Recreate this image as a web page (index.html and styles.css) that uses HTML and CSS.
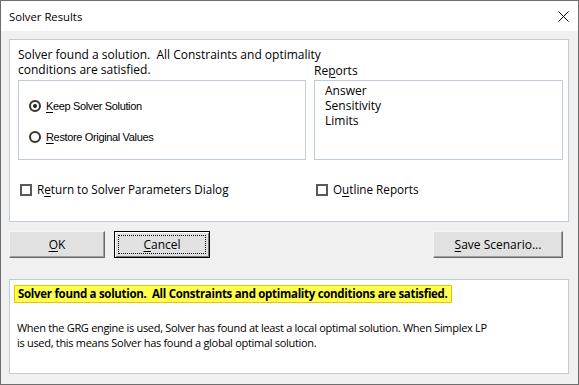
FILE: index.html
```html
<!DOCTYPE html>
<html lang="en">
<head>
  <meta charset="UTF-8" />
  <title>Solver Results</title>
  <link rel="stylesheet" href="styles.css">
</head>
<body>
  <div class="window">
    <div class="titlebar">
      <span class="title">Solver Results</span>
      <svg class="close" width="11" height="11" viewBox="0 0 11 11">
        <path d="M0.5 0.5 L10.5 10.5 M10.5 0.5 L0.5 10.5" stroke="#000" stroke-width="1" fill="none"/>
      </svg>
    </div>

    <div class="content">
      <div class="panel top">
        <div class="grid">
          <div class="message">Solver found a solution.&nbsp; All Constraints and optimality<br>conditions are satisfied.</div>
          <div class="reports-label">Re<u>p</u>orts</div>

          <div class="groupbox">
            <label class="radio"><span class="dot checked"></span><u>K</u>eep Solver Solution</label>
            <label class="radio"><span class="dot"></span><u>R</u>estore Original Values</label>
          </div>
          <div class="listbox">
            <div>Answer</div>
            <div>Sensitivity</div>
            <div>Limits</div>
          </div>

          <label class="check"><span class="box"></span>R<u>e</u>turn to Solver Parameters Dialog</label>
          <label class="check"><span class="box"></span>O<u>u</u>tline Reports</label>
        </div>
      </div>

      <div class="buttons">
        <button class="btn"><u>O</u>K</button>
        <button class="btn focused"><span class="focus"><u>C</u>ancel</span></button>
        <span class="spacer"></span>
        <button class="btn wide"><u>S</u>ave Scenario...</button>
      </div>

      <div class="panel bottom">
        <div class="highlight">Solver found a solution.&nbsp; All Constraints and optimality conditions are satisfied.</div>
        <p class="info">When the GRG engine is used, Solver has found at least a local optimal solution. When Simplex LP<br>is used, this means Solver has found a global optimal solution.</p>
      </div>
    </div>
  </div>
</body>
</html>
```

FILE: styles.css
```css
* { box-sizing: border-box; }
body {
  margin: 0;
  font-family: 'Open Sans', 'Noto Sans', sans-serif;
  font-size: 12px;
  color: #000;
}
u { text-decoration-thickness: 1px; text-underline-offset: 2px; }

.window {
  width: 579px;
  height: 385px;
  border: 1px solid #6e6e6e;
  background: #f0f0f0;
}
.titlebar {
  height: 30px;
  background: #fff;
  display: flex;
  align-items: center;
  justify-content: space-between;
  padding: 0 9px 0 8px;
}
.title { font-size: 11.3px; }
.close { margin-top: 1px; }

.content { padding: 8px 9px 0 8px; }
.panel {
  background: #fff;
  border: 1px solid #c1ccd9;
}
.panel.top { height: 183px; padding: 7px 6px 0 8px; }

.grid {
  display: grid;
  grid-template-columns: 288px 249px;
  column-gap: 8px;
}
.message {
  white-space: nowrap;
  line-height: 15px;
}
.reports-label {
  align-self: end;
  line-height: 15px;
  margin-bottom: -1px;
}
.groupbox, .listbox {
  margin-top: 3px;
  height: 80px;
  border: 1px solid #c1ccd9;
}
.groupbox { padding: 17px 0 0 10px; }
.listbox { padding: 2px 0 0 10px; line-height: 15px; }

.radio {
  display: flex;
  align-items: center;
  font-family: 'Liberation Sans', sans-serif;
  font-size: 11px;
  letter-spacing: -0.35px;
  height: 16px;
  margin-bottom: 15px;
}
.dot {
  width: 12px;
  height: 12px;
  border: 2px solid #333;
  border-radius: 50%;
  margin-right: 5px;
  position: relative;
}
.dot.checked::after {
  content: '';
  position: absolute;
  left: 2px;
  top: 2px;
  width: 4px;
  height: 4px;
  border-radius: 50%;
  background: #222;
}

.check {
  display: flex;
  align-items: center;
  margin-top: 22px;
  margin-left: 2px;
  font-size: 11.7px;
  line-height: 15px;
}
.check .box {
  width: 12px;
  height: 12px;
  border: 2px solid #5a5a5a;
  margin-right: 5px;
}

.buttons {
  display: flex;
  gap: 9px;
  margin-top: 9px;
  height: 27px;
}
.spacer { flex: 1; }
.btn {
  width: 96px;
  height: 27px;
  padding: 0;
  font-family: inherit;
  font-size: 12px;
  color: #000;
  background: #e1e1e1;
  border: 1px solid;
  border-color: #f4f4f4 #6a6a6a #6a6a6a #f4f4f4;
  box-shadow: inset -1px -1px 0 #a0a0a0;
}
.btn.focused {
  border: 1px solid #000;
  box-shadow: inset 1px 1px 0 #fff, inset -1px -1px 0 #7a7a7a;
  padding: 3px;
}
.focus {
  display: flex;
  align-items: center;
  justify-content: center;
  height: 100%;
  border: 1px dotted #000;
}
.btn.wide { width: 130px; margin-right: 6px; }

.panel.bottom {
  margin-top: 21px;
  height: 95px;
  padding: 5px 8px 0 4px;
}
.highlight {
  display: inline-block;
  background: #ffff4f;
  border: 1px solid #f2c100;
  font-size: 11.5px;
  font-weight: bold;
  letter-spacing: -0.3px;
  line-height: 16px;
  padding: 0 3px;
}
.info {
  margin: 17px 0 0 3px;
  font-size: 11px;
  letter-spacing: -0.3px;
  line-height: 15px;
}
```
